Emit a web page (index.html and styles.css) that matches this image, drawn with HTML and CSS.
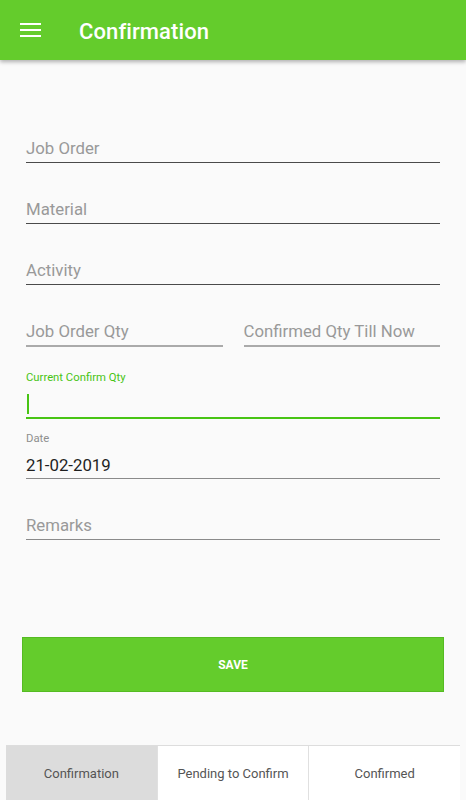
FILE: index.html
```html
<!DOCTYPE html>
<html lang="en">
<head>
  <meta charset="UTF-8">
  <meta name="viewport" content="width=device-width, initial-scale=1.0">
  <title>Confirmation</title>
  <link rel="stylesheet" href="styles.css">
</head>
<body>
  <header class="app-bar">
    <svg class="menu-icon" width="22" height="16" viewBox="0 0 22 16">
      <rect x="0" y="1" width="21" height="2" fill="#fff"/>
      <rect x="0" y="7" width="21" height="2" fill="#fff"/>
      <rect x="0" y="13" width="21" height="2" fill="#fff"/>
    </svg>
    <h1>Confirmation</h1>
  </header>

  <main class="form">
    <div class="field">
      <div class="label"></div>
      <div class="input placeholder">Job Order</div>
    </div>
    <div class="field">
      <div class="label"></div>
      <div class="input placeholder">Material</div>
    </div>
    <div class="field">
      <div class="label"></div>
      <div class="input placeholder">Activity</div>
    </div>
    <div class="field-row">
      <div class="field light">
        <div class="label"></div>
        <div class="input placeholder">Job Order Qty</div>
      </div>
      <div class="field light">
        <div class="label"></div>
        <div class="input placeholder">Confirmed Qty Till Now</div>
      </div>
    </div>
    <div class="field focused">
      <div class="label">Current Confirm Qty</div>
      <div class="input"><span class="cursor"></span></div>
    </div>
    <div class="field mid">
      <div class="label">Date</div>
      <div class="input date">21-02-2019</div>
    </div>
    <div class="field mid">
      <div class="label"></div>
      <div class="input placeholder">Remarks</div>
    </div>

    <button class="save-btn">SAVE</button>
  </main>

  <nav class="tabs">
    <div class="tab active">Confirmation</div>
    <div class="tab">Pending to Confirm</div>
    <div class="tab">Confirmed</div>
  </nav>
</body>
</html>
```

FILE: styles.css
```css
body {
  margin: 0;
  padding: 0;
  background-color: #fafafa;
  font-family: Roboto, "Liberation Sans", sans-serif;
  height: 800px;
  overflow: hidden;
}
.app-bar {
  height: 60px;
  background-color: #64cc2c;
  display: flex;
  align-items: center;
  padding-left: 20px;
  box-shadow: 0 2px 4px rgba(0, 0, 0, 0.3);
  position: relative;
}
.menu-icon {
  display: block;
  margin-top: -1px;
}
.app-bar h1 {
  margin: 2px 0 0 37px;
  color: white;
  font-size: 22px;
  font-weight: 500;
  letter-spacing: 0.1px;
}
.form {
  padding: 42px 26px 0 26px;
}
.field {
  padding-top: 13px;
  border-bottom: 1px solid #4a4a4a;
}
.field.light {
  border-bottom-color: #aaaaaa;
  border-bottom-width: 2px;
  margin-bottom: -1px;
}
.field.mid {
  border-bottom-color: #8a8a8a;
}
.label {
  height: 14px;
  line-height: 14px;
  font-size: 11.3px;
  color: #8e8e8e;
  margin-bottom: 9px;
}
.input {
  height: 24px;
  line-height: 20px;
  font-size: 16.8px;
  color: #1f1f1f;
}
.input.date {
  line-height: 22px;
}
.placeholder {
  color: #999999;
}
.field-row {
  display: flex;
  gap: 21px;
}
.field-row .field {
  flex: 1;
}
.field.focused {
  margin-top: 12px;
  border-bottom: 2px solid #48c414;
}
.field.focused .label {
  color: #48c414;
  margin-bottom: 8px;
}
.cursor {
  display: inline-block;
  width: 2px;
  height: 20px;
  margin-left: 1px;
  margin-top: 1px;
  vertical-align: top;
  background-color: #48c414;
}
.field.focused + .field {
  margin-top: -1px;
}
.field.focused + .field .label {
  margin-top: 1px;
  margin-bottom: 8px;
}
.save-btn {
  display: block;
  width: 422px;
  height: 55px;
  margin: 97px 0 0 -4px;
  background-color: #64cc2c;
  border: 1px solid #55bb22;
  color: white;
  font-family: Roboto, "Liberation Sans", sans-serif;
  font-size: 12px;
  font-weight: bold;
  cursor: pointer;
}
.tabs {
  display: flex;
  margin: 53px 6px 0 6px;
  border-top: 1px solid #dddddd;
}
.tab {
  flex: 1;
  height: 55px;
  display: flex;
  align-items: center;
  justify-content: center;
  background-color: white;
  border-left: 1px solid #e0e0e0;
  font-size: 13px;
  color: #555555;
}
.tab.active {
  background-color: #dcdcdc;
  border-left: none;
}
```
